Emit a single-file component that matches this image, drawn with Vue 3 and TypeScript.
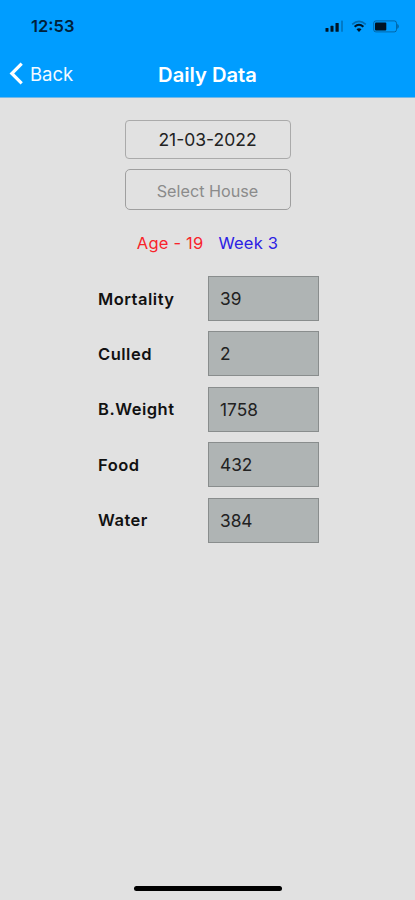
<script setup lang="ts">
import { ref } from 'vue'

interface Field {
  label: string
  value: string
}

const date = ref('21-03-2022')
const fields = ref<Field[]>([
  { label: 'Mortality', value: '39' },
  { label: 'Culled', value: '2' },
  { label: 'B.Weight', value: '1758' },
  { label: 'Food', value: '432' },
  { label: 'Water', value: '384' },
])
</script>

<template>
  <div class="screen">
    <header class="header">
      <div class="status">
        <span class="time">12:53</span>
        <div class="indicators">
          <svg class="signal" width="19" height="14" viewBox="0 0 19 14">
            <rect x="0.5" y="9" width="3" height="3.8" rx=".6" />
            <rect x="5.5" y="6.8" width="3" height="6" rx=".6" />
            <rect x="10.5" y="4" width="3.2" height="8.8" rx=".6" />
            <rect x="16" y="1.4" width="2" height="11.4" rx=".6" opacity=".25" />
          </svg>
          <svg class="wifi" width="16" height="13" viewBox="0 0 16 13">
            <path d="M1.2 4.4Q8-1.8 14.8 4.4" fill="none" stroke="#001424" stroke-width="1.6" opacity=".35" />
            <path d="M3.6 6.8Q8 2.8 12.4 6.8" fill="none" stroke="#001424" stroke-width="2" />
            <path d="M5.5 9.2Q8 7.2 10.5 9.2L8 11.9Z" />
          </svg>
          <svg class="battery" width="27" height="13" viewBox="0 0 27 13">
            <rect x=".7" y=".9" width="22.8" height="11" rx="2.2" fill="none" stroke="#001424" opacity=".38" />
            <rect x="2" y="2.4" width="11.3" height="8" rx="1" />
            <path d="M24.4 3.8Q27 6.4 24.4 9Z" opacity=".5" />
          </svg>
        </div>
      </div>
      <nav class="nav">
        <button class="back" type="button">
          <svg width="15" height="24" viewBox="0 0 15 24">
            <path d="M13.7 1.6L3.8 11.5L13.7 21.4" fill="none" stroke="#fff" stroke-width="3.2" />
          </svg>
          <span>Back</span>
        </button>
        <h1 class="title">Daily Data</h1>
      </nav>
    </header>

    <main class="content">
      <button class="picker date" type="button">{{ date }}</button>
      <button class="picker house" type="button">Select House</button>
      <div class="summary">
        <span class="age">Age - 19</span>
        <span class="week">Week 3</span>
      </div>
      <div class="form">
        <label v-for="field in fields" :key="field.label" class="row">
          <span class="label">{{ field.label }}</span>
          <input v-model="field.value" class="input" type="text" />
        </label>
      </div>
    </main>

    <footer class="footer"><div class="home-bar"></div></footer>
  </div>
</template>

<style>
body {
  margin: 0;
  background: #e1e1e1;
}
</style>

<style scoped>
.screen {
  box-sizing: border-box;
  display: flex;
  flex-direction: column;
  height: 900px;
  background: #e1e1e1;
  font-family: Inter, "Liberation Sans", sans-serif;
  color: #111;
}
button {
  margin: 0;
  padding: 0;
  border: 0;
  background: none;
  font-family: inherit;
}
.header {
  box-sizing: border-box;
  height: 98px;
  background: #009dff;
  border-bottom: 1px solid #72b8e8;
}
.status {
  display: flex;
  justify-content: space-between;
  align-items: center;
  height: 52px;
  padding: 0 15px 0 31px;
}
.time {
  font-size: 16.5px;
  font-weight: 600;
  color: #00213a;
}
.indicators {
  display: flex;
  align-items: center;
  fill: #001424;
}
.signal { margin-right: 7px; }
.wifi { margin-right: 6px; }
.nav {
  display: grid;
  grid-template-columns: 1fr auto 1fr;
  align-items: center;
  height: 44px;
  color: #fff;
}
.back {
  display: flex;
  align-items: center;
  gap: 7px;
  padding-left: 8px;
  color: #f2faff;
  font-size: 18.5px;
}
.title {
  grid-column: 2;
  margin: 0;
  font-size: 20.2px;
  font-weight: 600;
}
.content {
  flex: 1;
  display: flex;
  flex-direction: column;
  align-items: center;
  padding-top: 22px;
}
.picker {
  box-sizing: border-box;
  width: 166px;
  height: 39px;
  border: 1px solid #aaa;
  border-radius: 4px;
  font-size: 17.5px;
  color: #222;
}
.house {
  height: 41px;
  margin-top: 10px;
  padding-top: 2px;
  border: 1px solid #9f9f9f;
  border-radius: 5px;
  font-size: 16.2px;
  color: #8b8b8b;
}
.summary {
  display: flex;
  gap: 15px;
  margin-top: 22px;
  font-size: 16.5px;
  letter-spacing: .2px;
  line-height: 22px;
}
.age { color: #f8232b; }
.week { color: #2c20e4; }
.form {
  display: flex;
  flex-direction: column;
  gap: 10.4px;
  width: 221px;
  margin-top: 22px;
  padding-left: 2px;
}
.row {
  display: flex;
  justify-content: space-between;
  align-items: center;
}
.label {
  font-size: 16.5px;
  font-weight: 600;
  letter-spacing: .5px;
}
.input {
  box-sizing: border-box;
  width: 111px;
  height: 45px;
  padding: 0 11px;
  border: 1px solid #898d8d;
  border-radius: 0;
  background: #afb4b4;
  color: #222;
  font-family: inherit;
  font-size: 17.3px;
  outline: none;
}
.footer {
  display: flex;
  justify-content: center;
  height: 14px;
}
.home-bar {
  width: 148px;
  height: 5px;
  border-radius: 3px;
  background: #000;
}
</style>
